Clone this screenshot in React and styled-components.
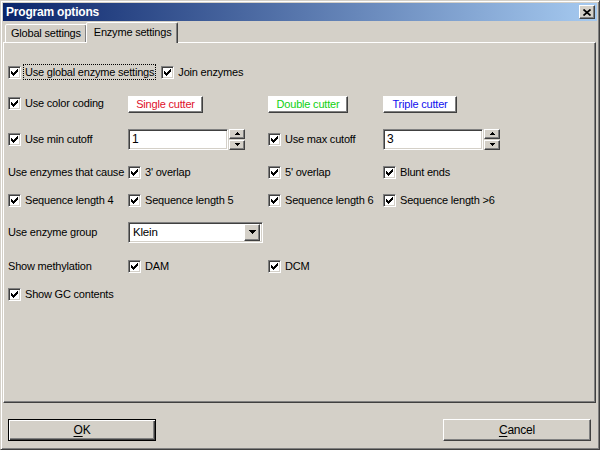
import React from "react";
import styled, { createGlobalStyle, css } from "styled-components";

const Global = createGlobalStyle`
  html, body { margin: 0; padding: 0; background: #d4d0c8; }
  body { font-family: "Liberation Sans", Arial, sans-serif; font-size: 11px; }
  * { box-sizing: border-box; }
`;

const FONT = `"Liberation Sans", Arial, sans-serif`;

const raised = css`
  border: 1px solid;
  border-color: #fff #404040 #404040 #fff;
  box-shadow: inset -1px -1px 0 #808080, inset 1px 1px 0 #d4d0c8;
`;

const sunken = css`
  border: 1px solid;
  border-color: #808080 #fff #fff #808080;
  box-shadow: inset 1px 1px 0 #404040, inset -1px -1px 0 #d4d0c8;
`;

const Window = styled.div`
  width: 600px;
  height: 450px;
  display: flex;
  flex-direction: column;
  background: #d4d0c8;
  border: 1px solid;
  border-color: #d4d0c8 #404040 #404040 #d4d0c8;
  box-shadow: inset 1px 1px 0 #fff, inset -1px -1px 0 #808080;
  padding: 2px;
  font-family: ${FONT};
  font-size: 11px;
  letter-spacing: -0.2px;
  color: #000;
`;

const TitleBar = styled.div`
  height: 18px;
  display: flex;
  align-items: center;
  justify-content: space-between;
  padding: 0 2px 0 3px;
  background: linear-gradient(to right, #0a246a, #a6caf0);
`;

const Title = styled.span`
  color: #fff;
  font-weight: bold;
  font-size: 12px;
  letter-spacing: -0.2px;
`;

const CloseButton = styled.div`
  width: 16px;
  height: 14px;
  background: #d4d0c8;
  ${raised};
  display: flex;
  align-items: center;
  justify-content: center;
`;

const TabStrip = styled.div`
  margin-top: 1px;
  height: 20px;
  display: flex;
  align-items: flex-end;
  padding-left: 2px;
  position: relative;
  z-index: 1;
`;

const Tab = styled.div`
  height: ${(p) => (p.$active ? 21 : 18)}px;
  margin-bottom: ${(p) => (p.$active ? -1 : 0)}px;
  padding: ${(p) => (p.$active ? "3px 6px 0 7px" : "2px 5px 0 5px")};
  background: #d4d0c8;
  border: 1px solid;
  border-bottom: none;
  border-color: #fff #404040 transparent #fff;
  box-shadow: inset -1px 0 0 #808080;
  border-radius: 2px 2px 0 0;
  white-space: nowrap;
  margin-left: ${(p) => (p.$active ? -1 : 0)}px;
`;

const Panel = styled.div`
  height: 361px;
  margin-right: 1px;
  border: 1px solid;
  border-color: #fff #404040 #404040 #fff;
  box-shadow: inset -1px -1px 0 #808080;
  padding: 17px 0 0 4px;
`;

const FormGrid = styled.div`
  display: grid;
  grid-template-columns: 120px 140px 115px 1fr;
  grid-template-rows: 24px 38px 34px 32px 24px 40px 28px 28px;
  align-items: center;
`;

const FullRow = styled.div`
  grid-column: 1 / -1;
  display: flex;
  align-items: center;
  gap: 5px;
`;

const CheckItem = styled.label`
  display: flex;
  align-items: center;
  gap: 2px;
  white-space: nowrap;
  grid-column: ${(p) => p.$span || "auto"};
`;

const Box = styled.span`
  width: 13px;
  height: 13px;
  flex: none;
  background: #fff;
  ${sunken};
  display: flex;
  align-items: center;
  justify-content: center;
`;

const LabelText = styled.span`
  padding: 1px 1px;
  border: 1px ${(p) => (p.$focus ? "dotted #000" : "solid transparent")};
`;

const Text = styled.span`
  white-space: nowrap;
`;

const ColorButton = styled.div`
  width: ${(p) => p.$w}px;
  height: 17px;
  margin-top: 3px;
  background: #fff;
  border: 1px solid;
  border-color: #fff #404040 #404040 #fff;
  box-shadow: inset -1px -1px 0 #808080;
  color: ${(p) => p.$color};
  display: flex;
  align-items: center;
  justify-content: center;
  padding-bottom: 1px;
  white-space: nowrap;
`;

const SpinGroup = styled.div`
  display: flex;
  align-items: center;
  gap: 1px;
`;

const Edit = styled.div`
  width: 100px;
  height: 21px;
  background: #fff;
  ${sunken};
  display: flex;
  align-items: center;
  padding-left: 3px;
  font-size: 12px;
`;

const SpinCol = styled.div`
  display: flex;
  flex-direction: column;
  gap: 1px;
`;

const SpinButton = styled.div`
  width: 16px;
  height: 10px;
  background: #d4d0c8;
  ${raised};
  display: flex;
  align-items: center;
  justify-content: center;
`;

const Combo = styled.div`
  width: 135px;
  height: 21px;
  background: #fff;
  ${sunken};
  display: flex;
  align-items: center;
  justify-content: space-between;
  padding: 2px 2px 2px 4px;
  font-size: 11.5px;
`;

const ComboButton = styled.div`
  width: 16px;
  height: 17px;
  background: #d4d0c8;
  ${raised};
  display: flex;
  align-items: center;
  justify-content: center;
`;

const Footer = styled.div`
  display: flex;
  justify-content: space-between;
  padding: 16px 6px 0 5px;
`;

const DialogButton = styled.div`
  width: 148px;
  height: 22px;
  background: #d4d0c8;
  display: flex;
  align-items: center;
  justify-content: center;
  font-size: 12px;
  ${(p) =>
    p.$default
      ? css`
          border: 1px solid #000;
          box-shadow: inset 1px 1px 0 #fff, inset -1px -1px 0 #404040,
            inset -2px -2px 0 #808080;
        `
      : css`
          border: 1px solid;
          border-color: #fff #404040 #404040 #fff;
          box-shadow: inset -1px -1px 0 #808080;
        `}
  u { text-decoration: underline; text-underline-offset: 2px; }
`;

const CheckMark = () => (
  <svg width="7" height="7" viewBox="0 0 7 7" shapeRendering="crispEdges">
    <path
      d="M6 0h1v3h-1v1h-1v1h-1v1h-1v1h-1v-1h-1v-1h-1v-3h1v1h1v1h1v-1h1v-1h1z"
      fill="#000"
    />
  </svg>
);

const Arrow = ({ up }) => (
  <svg width="5" height="3" viewBox="0 0 5 3" shapeRendering="crispEdges">
    <path
      d={up ? "M2 0h1v1h1v1h1v1h-5v-1h1v-1h1z" : "M0 0h5v1h-1v1h-1v1h-1v-1h-1v-1h-1z"}
      fill="#000"
    />
  </svg>
);

const ComboArrow = () => (
  <svg width="7" height="4" viewBox="0 0 7 4" shapeRendering="crispEdges">
    <path d="M0 0h7v1h-1v1h-1v1h-1v1h-1v-1h-1v-1h-1v-1h-1z" fill="#000" />
  </svg>
);

const Check = ({ children, focus, span }) => (
  <CheckItem $span={span}>
    <Box>
      <CheckMark />
    </Box>
    <LabelText $focus={focus}>{children}</LabelText>
  </CheckItem>
);

const Spin = ({ value }) => (
  <SpinGroup>
    <Edit>{value}</Edit>
    <SpinCol>
      <SpinButton>
        <Arrow up />
      </SpinButton>
      <SpinButton>
        <Arrow />
      </SpinButton>
    </SpinCol>
  </SpinGroup>
);

export default function App() {
  return (
    <>
      <Global />
      <Window>
        <TitleBar>
          <Title>Program options</Title>
          <CloseButton>
            <svg width="8" height="7" viewBox="0 0 8 7">
              <path d="M0.5 0.5L7.5 6.5M7.5 0.5L0.5 6.5" stroke="#000" strokeWidth="1.7" />
            </svg>
          </CloseButton>
        </TitleBar>
        <TabStrip>
          <Tab>Global settings</Tab>
          <Tab $active>Enzyme settings</Tab>
        </TabStrip>
        <Panel>
          <FormGrid>
            <FullRow>
              <Check focus>Use global enzyme settings</Check>
              <Check>Join enzymes</Check>
            </FullRow>

            <Check>Use color coding</Check>
            <ColorButton $w={75} $color="#e0102a">Single cutter</ColorButton>
            <ColorButton $w={80} $color="#10d010">Double cutter</ColorButton>
            <ColorButton $w={74} $color="#1010ee">Triple cutter</ColorButton>

            <Check>Use min cutoff</Check>
            <Spin value="1" />
            <Check>Use max cutoff</Check>
            <Spin value="3" />

            <Text>Use enzymes that cause</Text>
            <Check>3' overlap</Check>
            <Check>5' overlap</Check>
            <Check>Blunt ends</Check>

            <Check>Sequence length 4</Check>
            <Check>Sequence length 5</Check>
            <Check>Sequence length 6</Check>
            <Check>Sequence length &gt;6</Check>

            <Text>Use enzyme group</Text>
            <Combo>
              <span>Klein</span>
              <ComboButton>
                <ComboArrow />
              </ComboButton>
            </Combo>
            <span />
            <span />

            <Text>Show methylation</Text>
            <Check>DAM</Check>
            <Check>DCM</Check>
            <span />

            <Check span="1 / 3">Show GC contents</Check>
          </FormGrid>
        </Panel>
        <Footer>
          <DialogButton $default>
            <span>
              <u>O</u>K
            </span>
          </DialogButton>
          <DialogButton>
            <span>
              <u>C</u>ancel
            </span>
          </DialogButton>
        </Footer>
      </Window>
    </>
  );
}
